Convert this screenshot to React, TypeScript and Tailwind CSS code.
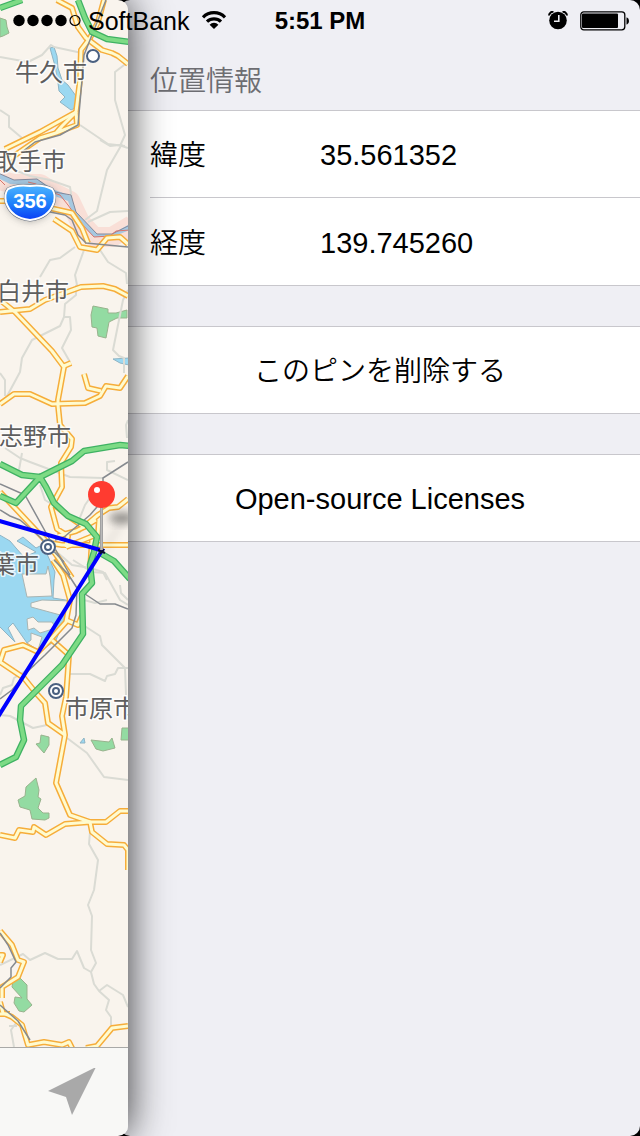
import React from "react";

const TRAILS = [
  "M0 57L28 62L42 55L51 45L54 47L82 53",
  "M128 62L115 72L115 100L125 135L120 146",
  "M80 125L108 144L125 146",
  "M0 110L9 116L9 127L22 138",
  "M100 140L110 146L119 145L128 148",
  "M122 144L107 170L97 211L85 220",
  "M128 211L110 212L88 222",
  "M17 171L30 176L50 180L70 187L72 200",
  "M84 250L75 275L78 290",
  "M100 250L108 262L126 273L127 284",
  "M75 247L60 258L50 260L40 277",
  "M76 285L76 295L65 304L64 317L60 326L32 340L22 358L20 372L6 398",
  "M64 317L70 317L71 330L62 348L70 362",
  "M0 373L5 380L5 396",
  "M128 290L123 300L113 350L119 356L124 358L124 373",
  "M128 420L126 425L127 438",
  "M5 448L20 458L30 462L70 477L103 478",
  "M22 453L19 470",
  "M40 485L45 500L50 503",
  "M80 533L79 520L85 505L92 495",
  "M128 480L107 470L107 462L115 461",
  "M58 553L72 565L90 568L103 572L107 580",
  "M73 560L92 572L105 573L120 600L128 605",
  "M120 585L121 593L128 600",
  "M84 600L95 603L107 600",
  "M83 625L100 636L102 645L125 668L126 695",
  "M70 674L90 674L105 681L107 676L115 674L118 668L128 668",
  "M0 695L3 688L12 685L14 678L35 665",
  "M67 738L87 753L104 777L128 780",
  "M0 715L10 716L33 728L47 725",
  "M90 832L89 844L98 860L94 890L88 905L92 916L91 950L96 963L91 972L94 984L99 991L109 1000L106 1010L111 1017L111 1025",
  "M0 965L23 954L30 960L45 953L58 959L72 959L77 951L84 968L91 972",
  "M99 991L107 985L123 995L128 1007",
  "M16 1023L11 1030L14 1047M9 1026L17 1026",
];

const ROADS = [
  "M57 0L72 8L78 27L86 38L102 50L112 53L118 56L128 64",
  "M104 0L98 22L90 38L81 50L80 80L76 112L40 132L5 149",
  "M76 112L77 125L66 129L56 133M76 112L62 126L56 133L40 138L8 160",
  "M0 201L14 201",
  "M50 208L72 213L82 228L88 243",
  "M54 219L72 231L80 247L97 250L107 238L120 237L128 244",
  "M0 312L30 309L45 300L81 287L103 286L115 289L128 296",
  "M0 300L15 312L52 351L64 367L58 400L58 405L60 425L72 439L71 447L61 463L62 487L51 507L57 529L68 536L66 547",
  "M64 366L71 363",
  "M0 404L14 394L30 394L52 404L85 403L100 396L106 386L120 388L128 376",
  "M84 374L88 388L101 391",
  "M52 503L68 516L84 527L96 520",
  "M0 492L45 540L57 556L72 578",
  "M66 547L98 534L99 520",
  "M58 536L76 531L84 527L98 515L109 508L118 507L128 499",
  "M50 543L62 545L128 545",
  "M92 540L90 570",
  "M53 560L63 575L70 600L66 622L50 640L38 652L23 645L4 650L0 662L24 678L36 693L45 703L48 723L65 735",
  "M66 620L78 625L82 616",
  "M52 640L69 655L66 697L62 716L65 735L56 783L70 815L90 822L106 822L120 811L130 811",
  "M0 835L15 838L19 830L33 832L34 827L46 835L65 824L90 822L92 832L107 844L124 845L128 850L128 870",
  "M0 931L12 945L18 960L24 962L18 977L2 987L2 998",
  "M0 955L3 955L0 962",
  "M0 1002L3 1013L12 1017L22 1025L28 1045L44 1042L62 1045L69 1042L73 1050",
  "M0 1014L10 1014",
  "M86 1048L97 1046L112 1028L128 1026",
];

const RAILS = [
  "M106 0L92 35L84 55L82 80L78 125L60 135L35 142L22 152",
  "M50 212L65 215L72 220L78 235L86 243L128 247",
  "M0 484L25 495L50 540L70 575",
  "M128 462L103 478L103 500L90 515L63 538L55 540",
  "M0 510L10 516L20 520L40 537L64 562",
  "M54 560L68 574L77 588L76 615L72 628L60 640L45 655L28 671L12 690L0 699",
  "M82 592L100 604L115 604L128 609",
  "M0 933L8 945L16 962L11 968L11 977L0 988",
  "M0 1005L18 1021L30 1040",
];

const HIGHWAYS = [
  "M0 8L22 0",
  "M78 0L85 18L92 32L107 39L130 42",
  "M0 464L22 475L40 477L72 461L84 451L120 445L130 446",
  "M0 496L16 503L40 477L46 487L54 503L68 516L86 524L97 537L94 552L90 565L92 583L82 594L83 634L62 665L30 697L21 706L20 720L24 740L16 757L0 765",
  "M100 553L114 561L130 579",
];

const PARKS = [
  "0,18 6,20 7,27 9,33 3,36 0,37",
  "93,306 108,309 108,313 116,313 127,310 127,318 117,318 109,322 106,338 98,336 97,328 92,327 91,315",
  "41,735 49,737 49,745 44,753 36,744 40,743",
  "91,740 109,742 112,738 115,748 103,751 96,749",
  "122,728 129,728 129,740 121,740",
  "36,778 39,790 38,797 41,799 38,808 43,813 49,813 49,818 45,820 32,819 30,810 20,807 18,800 25,796 26,787",
  "13,981 20,978 27,985 27,999 32,1005 24,1012 19,1011 14,1003 15,997 22,998 12,987",
];

const LANDS = [
  "22,574 46,574 48,566 50,576 52,596 27,597",
  "31,603 42,600 72,601 64,616 31,607",
  "27,619 33,617 38,622 52,622 56,628 40,633 34,628 28,630",
  "31,640 31,633 42,637 38,650 27,643",
];

const CITIES = [
  { name: "牛久市", x: 15, y: 81 },
  { name: "取手市", x: -6, y: 170 },
  { name: "白井市", x: -3, y: 300 },
  { name: "志野市", x: -1, y: 445 },
  { name: "葉市", x: -9, y: 573 },
  { name: "市原市", x: 65, y: 717 },
];

function Strokes({ paths, color, width }: { paths: string[]; color: string; width: number }) {
  return (
    <g fill="none" stroke={color} strokeWidth={width} strokeLinejoin="round">
      {paths.map((d) => (
        <path key={d} d={d} />
      ))}
    </g>
  );
}

function CityMarker({ x, y, ring }: { x: number; y: number; ring?: boolean }) {
  return (
    <g>
      <circle cx={x} cy={y} r={ring ? 8 : 7} fill="#fff" opacity="0.8" />
      <circle cx={x} cy={y} r={ring ? 7 : 6} fill="#fff" stroke="#4a6080" strokeWidth="2" />
      {ring && <circle cx={x} cy={y} r="3" fill="#fff" stroke="#4a6080" strokeWidth="2" />}
    </g>
  );
}

function MapView() {
  return (
    <svg
      viewBox="0 0 128 1047"
      preserveAspectRatio="xMinYMin slice"
      className="block min-h-0 w-full flex-1 bg-[#f9f4ed]"
      role="img"
      aria-label="地図"
    >
      <defs>
        <linearGradient id="shield" x1="0" y1="0" x2="0" y2="1">
          <stop offset="0" stopColor="#4db4ff" />
          <stop offset="0.5" stopColor="#1f83fb" />
          <stop offset="1" stopColor="#0a3df5" />
        </linearGradient>
        <filter id="soft" x="-50%" y="-50%" width="200%" height="200%">
          <feGaussianBlur stdDeviation="4" />
        </filter>
      </defs>

      <path
        d="M0 180L14 184L40 184L56 194L70 201L80 222L94 237L112 237L132 225"
        fill="none"
        stroke="#f9dfd7"
        strokeWidth="20"
        strokeLinejoin="round"
      />
      <g fill="#9bd8f1" stroke="#8fb4c4" strokeWidth="1">
        <path d="M50 48L54 47L57 56L58 68L62 80L68 85L76 96L75 108L71 110L60 102L65 97L59 91L58 83L55 66Z" />
        <path d="M-2 534L10 541L16 548L24 557L36 552L17 541L23 537L36 548L44 544L47 554L55 572L54 580L53 598L72 601L66 617L56 640L42 650L27 643L13 623L8 628L15 642L0 627L-2 627Z" />
        <path d="M113 359L129 358L129 365L120 363ZM80 743L84 738L85 743Z" />
      </g>
      <g fill="#f9f4ed" stroke="#a9b5b3" strokeWidth="1">
        {LANDS.map((points) => (
          <polygon key={points} points={points} />
        ))}
      </g>
      <g fill="#93dba2" stroke="#98b38d" strokeWidth="1">
        {PARKS.map((points) => (
          <polygon key={points} points={points} />
        ))}
      </g>

      <Strokes paths={TRAILS} color="#dadbd4" width={2} />
      <path
        d="M-2 173L14 180L37 179L55 190L71 196L76 212L97 234L112 234L130 224L130 230L112 237L94 237L73 215L68 201L52 195L37 186L10 184L-2 178Z"
        fill="#a6c8e0"
      />
      <path d="M-2 173L14 180L37 179L55 192L71 195L76 212L97 234L112 234L130 225" fill="none" stroke="#82879a" strokeWidth="1" />
      <path d="M0 180L5 185M28 182L36 184L45 190L60 195L68 205L80 222L94 237L110 236L116 231L130 230" fill="none" stroke="#d9756c" strokeWidth="1" />

      <Strokes paths={ROADS} color="#f6ad3a" width={6} />
      <Strokes paths={ROADS} color="#fffbcf" width={3} />
      <Strokes paths={RAILS} color="#868a8f" width={1.5} />
      <Strokes paths={HIGHWAYS} color="#3fb263" width={6.5} />
      <Strokes paths={HIGHWAYS} color="#7ddb85" width={4} />

      <CityMarker x={93} y={56} />
      <CityMarker x={48} y={547} ring />
      <CityMarker x={56} y={691} ring />

      <g
        className="font-['Noto_Sans_CJK_JP',sans-serif] text-[24px]"
        fill="#5e5e5e"
        stroke="#fff"
        strokeOpacity="0.8"
        strokeWidth="3"
        strokeLinejoin="round"
        paintOrder="stroke"
      >
        {CITIES.map((city) => (
          <text key={city.name} x={city.x} y={city.y}>
            {city.name}
          </text>
        ))}
      </g>

      <path d="M8 190Q18 185 30 187Q42 185 52 190Q56 194 54 202Q49 218 30 221Q11 218 6 202Q4 194 8 190Z" fill="#444" opacity="0.5" filter="url(#soft)" />
      <path d="M8 189Q18 184 30 186Q42 184 52 189Q56 194 54 202Q49 218 30 220Q11 218 6 202Q4 194 8 189Z" fill="url(#shield)" stroke="#6a7280" strokeWidth="3" />
      <path d="M8 189Q18 184 30 186Q42 184 52 189Q56 194 54 202Q49 218 30 220Q11 218 6 202Q4 194 8 189Z" fill="url(#shield)" stroke="#fff" strokeWidth="2" />
      <text x="30" y="208" textAnchor="middle" fill="#fff" className="font-['Liberation_Sans',sans-serif] text-[20px] font-bold">
        356
      </text>

      <ellipse cx="122" cy="518" rx="13" ry="6" fill="#333" opacity="0.5" filter="url(#soft)" />
      <path d="M104 550L122 522" stroke="#333" strokeWidth="4" opacity="0.15" filter="url(#soft)" />
      <path d="M-2 520.5L102 550.5L-2 717" fill="none" stroke="#0000ff" strokeWidth="4" />
      <path d="M98 550L105 553M100 554L104 549" stroke="#0b0b30" strokeWidth="2" />
      <path d="M101.500 506V550" stroke="#9a9a9a" strokeWidth="3" />
      <path d="M101.500 506V550" stroke="#bababa" strokeWidth="1.500" />
      <circle cx="101.500" cy="494.500" r="13.500" fill="#ff3b30" />
      <circle cx="97" cy="490" r="3" fill="#fff" />
    </svg>
  );
}

function StatusBar() {
  return (
    <header className="absolute inset-x-0 top-0 z-20 grid h-[42px] grid-cols-[1fr_auto_1fr] items-center font-['Liberation_Sans',sans-serif] text-black">
      <div className="flex items-center pl-3">
        <svg width="70" height="14" viewBox="0 0 70 14" aria-hidden="true">
          {[7, 21, 35, 49].map((cx) => (
            <circle key={cx} cx={cx} cy="6.500" r="5.700" />
          ))}
          <circle cx="63" cy="6.500" r="5" fill="none" stroke="#000" strokeWidth="1.200" />
        </svg>
        <span className="ml-1.5 text-[25px] leading-10">SoftBank</span>
        <svg width="26" height="20" viewBox="0 0 26 20" className="ml-3" role="img" aria-label="Wi-Fi">
          <path d="M2 6.300A15.500 15.500 0 0 1 24 6.300" fill="none" stroke="#000" strokeWidth="3.200" />
          <path d="M6 10.700A10 10 0 0 1 20 10.700" fill="none" stroke="#000" strokeWidth="3.200" />
          <path d="M13 18L8.600 13.700A6.200 6.200 0 0 1 17.400 13.700Z" />
        </svg>
      </div>
      <time className="text-2xl leading-10 font-bold">5:51 PM</time>
      <div className="flex items-center justify-end gap-3 pr-2.5">
        <svg width="20" height="20" viewBox="0 0 20 20" role="img" aria-label="アラーム">
          <circle cx="10" cy="9.500" r="8.800" />
          <path d="M1 4.500A4 4 0 0 1 5.500 0.800M19 4.500A4 4 0 0 0 14.500 0.800" fill="none" stroke="#000" strokeWidth="2" />
          <path d="M10.800 4V10.300H6" fill="none" stroke="#efeff4" strokeWidth="1.600" />
        </svg>
        <svg width="50" height="20" viewBox="0 0 50 20" role="img" aria-label="バッテリー">
          <rect x="0.800" y="0.800" width="44" height="18" rx="3" fill="none" stroke="#000" strokeWidth="1.300" />
          <rect x="2" y="2.500" width="36" height="14.500" rx="1" />
          <path d="M46.500 6.500H47Q49 7 49 10T47 13.500H46.500Z" />
        </svg>
      </div>
    </header>
  );
}

function InfoRow({ label, value, divided }: { label: string; value: string; divided?: boolean }) {
  return (
    <div className={divided ? "ml-[30px] flex h-[87px] items-center border-b border-[#c8c7cc]" : "ml-[30px] flex h-[87px] items-center"}>
      <dt className="w-[170px] pt-1 text-[28px] leading-10 font-[350]">{label}</dt>
      <dd className="pt-0.5 text-[29px] leading-10">{value}</dd>
    </div>
  );
}

export default function App() {
  return (
    <div
      lang="ja"
      className="relative flex min-h-screen bg-black font-['Liberation_Sans','Noto_Sans_CJK_JP',sans-serif] text-black"
    >
      <StatusBar />

      <aside className="relative z-10 flex w-1/5 shrink-0 flex-col overflow-hidden rounded-r-[10px] shadow-[0_0_40px_rgba(0,0,0,0.8)]">
        <MapView />
        <div className="flex h-[89px] items-center justify-end border-t border-[#a9a9a7] bg-[#f8f8f6] pr-8">
          <button type="button" aria-label="現在地">
            <svg width="48" height="48" viewBox="0 0 48 48" fill="#a9a9a9" className="block">
              <path d="M48 -1L0 23L18 29L24 47Z" />
            </svg>
          </button>
        </div>
      </aside>

      <main className="-ml-2 flex-1 overflow-hidden rounded-[10px] bg-[#efeff4]">
        <h1 className="flex h-[110px] items-end pb-2 pl-[30px] text-[28px] leading-10 font-[350] text-[#6d6d72]">位置情報</h1>
        <dl className="border-y border-[#c8c7cc] bg-white">
          <InfoRow label="緯度" value="35.561352" divided />
          <InfoRow label="経度" value="139.745260" />
        </dl>
        <button
          type="button"
          className="mt-10 block h-[88px] w-full border-y border-[#c8c7cc] bg-white pt-1 text-[28px] leading-10 font-[350]"
        >
          このピンを削除する
        </button>
        <button
          type="button"
          className="mt-10 block h-[88px] w-full border-y border-[#c8c7cc] bg-white pt-0.5 text-[29px] leading-10"
        >
          Open-source Licenses
        </button>
      </main>
    </div>
  );
}
